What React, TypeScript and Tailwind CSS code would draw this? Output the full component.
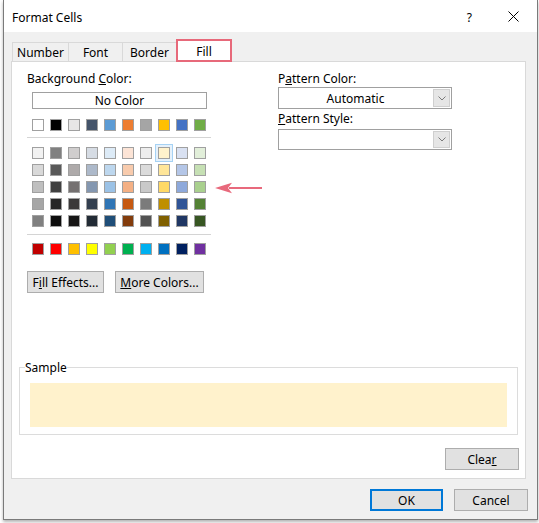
import React from "react"

const themeRows = [
  ["#f2f2f2", "#808080", "#d0cece", "#d6dce4", "#ddebf7", "#fce4d6", "#ededed", "#fff2cc", "#d9e1f2", "#e2efda"],
  ["#d9d9d9", "#595959", "#aeaaaa", "#adb9ca", "#bdd7ee", "#f8cbad", "#dbdbdb", "#ffe699", "#b4c6e7", "#c6e0b4"],
  ["#bfbfbf", "#404040", "#757171", "#8497b0", "#9bc2e6", "#f4b084", "#c9c9c9", "#ffd966", "#8ea9db", "#a9d08e"],
  ["#a6a6a6", "#262626", "#3a3838", "#333f4f", "#2f75b5", "#c65911", "#7b7b7b", "#bf8f00", "#305496", "#548235"],
  ["#808080", "#0d0d0d", "#171616", "#222b35", "#1f4e78", "#833c0c", "#525252", "#806000", "#203764", "#375623"],
]

const baseColors = ["#ffffff", "#000000", "#e7e6e6", "#44546a", "#5b9bd5", "#ed7d31", "#a5a5a5", "#ffc000", "#4472c4", "#70ad47"]
const standardColors = ["#c00000", "#ff0000", "#ffc000", "#ffff00", "#92d050", "#00b050", "#00b0f0", "#0070c0", "#002060", "#7030a0"]

function Swatch({ color, selected }: { color: string; selected?: boolean }) {
  return (
    <div
      className={
        "w-[12px] h-[12px] border border-[#a0a0a0] " +
        (selected ? "shadow-[0_0_0_2px_#e5f1fb,0_0_0_3px_#a6d2f4]" : "")
      }
      style={{ backgroundColor: color }}
    />
  )
}

function Chevron() {
  return (
    <svg width="8" height="5" viewBox="0 0 8 5" fill="none">
      <polyline points="0.5,0.5 4,4 7.5,0.5" stroke="#7a7a7a" strokeWidth="1" />
    </svg>
  )
}

function Combo({ value, h }: { value?: string; h: string }) {
  return (
    <div className={"flex w-[174px] border border-[#a0a0a0] bg-white " + h}>
      <div className="flex-1 flex items-center justify-center pt-px">{value}</div>
      <div className="w-[17px] m-px bg-[#e6e6e6] border border-[#cfcfcf] flex items-center justify-center">
        <Chevron />
      </div>
    </div>
  )
}

function Button({ children, className = "" }: { children: React.ReactNode; className?: string }) {
  return (
    <div
      className={
        "h-[22px] flex items-center justify-center pt-px bg-[#e1e1e1] border border-[#adadad] " + className
      }
    >
      {children}
    </div>
  )
}

export default function App() {
  return (
    <div
      className="w-[539px] h-[523px] bg-white text-[12px] text-black"
      style={{ fontFamily: '"Noto Sans", "Open Sans", sans-serif' }}
    >
      <div className="ml-[3px] w-[535px] h-[520px] flex flex-col border-l border-r border-b border-[#7a7a7a] shadow-[0_2px_3px_rgba(0,0,0,0.3)]">
        {/* Title bar */}
        <div className="h-[32px] bg-white flex items-center pl-[8px] pr-[18px] pt-[3px]">
          <span className="flex-1 leading-none">Format Cells</span>
          <span className="mr-[36px] leading-none">?</span>
          <svg width="11" height="11" viewBox="0 0 11 11" className="-mt-[2px]">
            <path d="M0.5 0.5 L10.5 10.5 M10.5 0.5 L0.5 10.5" stroke="#000" strokeWidth="1" />
          </svg>
        </div>

        {/* Body */}
        <div className="flex-1 bg-[#f0f0f0] pl-[7px]">
          {/* Tabs */}
          <div className="h-[29px] flex items-end ml-[1px]">
            <div className="w-[57px] h-[19px] pt-[2px] border-l border-t border-r border-[#d9d9d9] flex items-center justify-center">
              Number
            </div>
            <div className="w-[54px] h-[19px] pt-[2px] border-t border-r border-[#d9d9d9] flex items-center justify-center">
              Font
            </div>
            <div className="w-[54px] h-[19px] pt-[2px] border-t border-r border-[#d9d9d9] flex items-center justify-center">
              Border
            </div>
            <div className="relative z-10 -ml-px -mb-px w-[56px] h-[23px] pt-[2px] bg-white border-2 border-[#e7697a] flex items-center justify-center">
              Fill
            </div>
          </div>

          {/* Panel */}
          <div className="relative w-[515px] h-[418px] bg-white border border-[#d9d9d9] flex flex-col">
            <div className="flex pt-[9px] pl-[15px]">
              {/* Background colour */}
              <div className="w-[184px] flex flex-col">
                <div className="h-[15px] leading-[15px]">
                  Background <span className="underline">C</span>olor:
                </div>
                <div className="mt-[6px] ml-[5px] w-[175px] h-[17px] pt-px border border-[#a0a0a0] flex items-center justify-center">
                  No Color
                </div>
                <div className="mt-[10px] ml-[5px] flex gap-[6px]">
                  {baseColors.map((c) => (
                    <Swatch key={c} color={c} />
                  ))}
                </div>
                <div className="mt-[6px] h-px bg-[#d4d4d4]" />
                <div className="mt-[9px] ml-[5px] flex flex-col gap-[5px]">
                  {themeRows.map((row, r) => (
                    <div key={r} className="flex gap-[6px]">
                      {row.map((c, i) => (
                        <Swatch key={i} color={c} selected={r === 0 && i === 7} />
                      ))}
                    </div>
                  ))}
                </div>
                <div className="mt-[7px] h-px bg-[#d4d4d4]" />
                <div className="mt-[8px] ml-[5px] flex gap-[6px]">
                  {standardColors.map((c, i) => (
                    <Swatch key={i} color={c} />
                  ))}
                </div>
                <div className="mt-[16px] flex gap-[11px]">
                  <Button className="w-[77px]">
                    F<span className="underline">i</span>ll Effects...
                  </Button>
                  <Button className="w-[89px]">
                    <span className="underline">M</span>ore Colors...
                  </Button>
                </div>
              </div>

              {/* Pattern */}
              <div className="ml-[67px] flex flex-col">
                <div className="h-[15px] leading-[15px]">
                  P<span className="underline">a</span>ttern Color:
                </div>
                <div className="mt-[1px]">
                  <Combo value="Automatic" h="h-[22px]" />
                </div>
                <div className="mt-[2px] h-[15px] leading-[15px]">
                  <span className="underline">P</span>attern Style:
                </div>
                <div className="mt-[3px]">
                  <Combo h="h-[21px]" />
                </div>
              </div>
            </div>

            {/* Annotation arrow */}
            <svg className="absolute left-[203px] top-[120px]" width="48" height="12" viewBox="0 0 48 12">
              <path d="M14 6 L47 6" stroke="#e8697c" strokeWidth="2.2" />
              <path d="M0 6 L17 0.8 L13 6 L17 11.2 Z" fill="#e8697c" />
            </svg>

            {/* Sample */}
            <fieldset className="mt-[67px] ml-[7px] w-[499px] border border-[#dcdcdc] pb-[7px]">
              <legend className="ml-[5px] leading-[15px] h-[15px]">Sample</legend>
              <div className="mt-[8px] mx-[10px] h-[44px] bg-[#fff2cc]" />
            </fieldset>

            <div className="mt-[13px] flex justify-end pr-[6px]">
              <Button className="w-[74px]">
                Clea<span className="underline">r</span>
              </Button>
            </div>
          </div>

          {/* Footer buttons */}
          <div className="mt-[10px] flex justify-end gap-[11px] pr-[9px]">
            <div className="w-[73px] h-[22px] pt-px flex items-center justify-center bg-[#e1e1e1] border-2 border-[#0078d7]">
              OK
            </div>
            <Button className="w-[74px]">Cancel</Button>
          </div>
        </div>
      </div>
    </div>
  )
}
